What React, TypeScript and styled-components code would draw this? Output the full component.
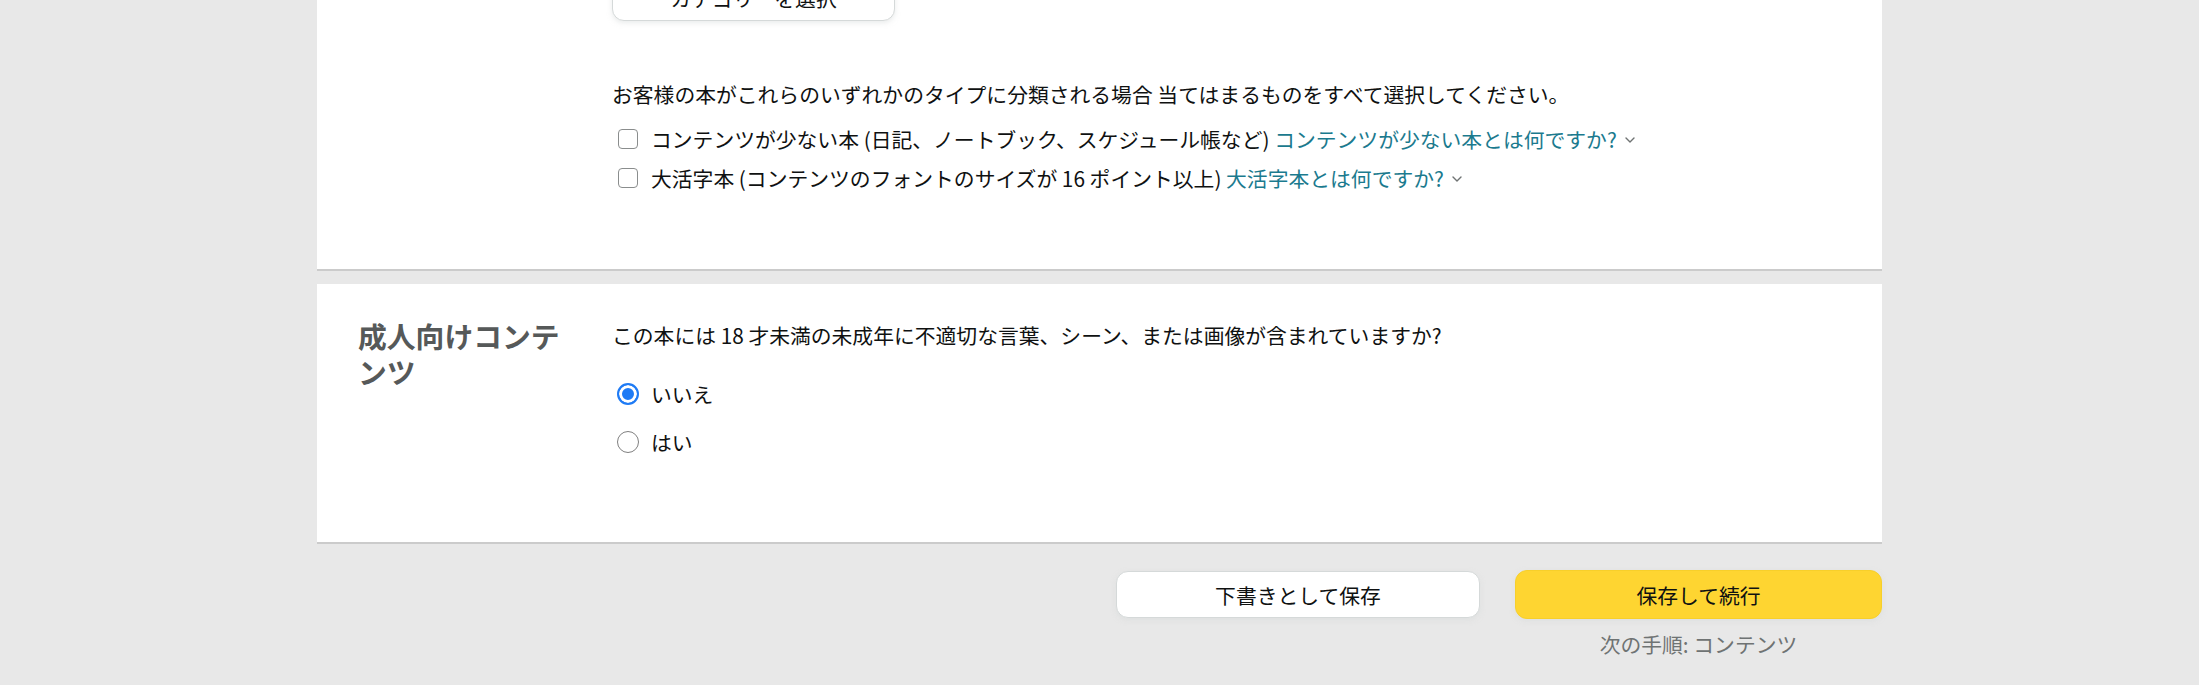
import React, {useState} from "react";
import styled, {createGlobalStyle} from "styled-components";

const GlobalStyle = createGlobalStyle`
  html, body {
    margin: 0;
    padding: 0;
    background: #e8e8e8;
  }
  body {
    font-family: "Noto Sans CJK JP", "Noto Sans", sans-serif;
    color: #0f1111;
  }
`

type RadioProps = {
    checked: boolean
}

const Chevron = () => (
    <ChevronIcon viewBox="0 0 10 6" width={10} height={6}>
        <polyline points="1,1 5,5 9,1" fill="none" stroke="#6f7373" strokeWidth={1.4} strokeLinecap="round" strokeLinejoin="round"/>
    </ChevronIcon>
)

export default function App() {
    const [adult, setAdult] = useState<string>('no')
    const [lowContent, setLowContent] = useState<boolean>(false)
    const [largePrint, setLargePrint] = useState<boolean>(false)

    return (
        <>
            <GlobalStyle/>
            <Page>
                <Panel>
                    <div/>
                    <Content>
                        <CategoryButton>カテゴリーを選択</CategoryButton>
                        <Description>
                            お客様の本がこれらのいずれかのタイプに分類される場合 当てはまるものをすべて選択してください。
                        </Description>
                        <CheckRow onClick={() => setLowContent(!lowContent)}>
                            <CheckBox checked={lowContent}/>
                            <span>
                                コンテンツが少ない本 (日記、ノートブック、スケジュール帳など) <HelpLink>コンテンツが少ない本とは何ですか?</HelpLink>
                                <Chevron/>
                            </span>
                        </CheckRow>
                        <CheckRow $second onClick={() => setLargePrint(!largePrint)}>
                            <CheckBox checked={largePrint}/>
                            <span>
                                大活字本 (コンテンツのフォントのサイズが 16 ポイント以上) <HelpLink>大活字本とは何ですか?</HelpLink>
                                <Chevron/>
                            </span>
                        </CheckRow>
                    </Content>
                </Panel>

                <Panel $adult>
                    <Heading>成人向けコンテンツ</Heading>
                    <Content>
                        <Question>この本には 18 才未満の未成年に不適切な言葉、シーン、または画像が含まれていますか?</Question>
                        <RadioGroup>
                            <RadioRow onClick={() => setAdult('no')}>
                                <Radio checked={adult === 'no'}/>
                                <span>いいえ</span>
                            </RadioRow>
                            <RadioRow onClick={() => setAdult('yes')}>
                                <Radio checked={adult === 'yes'}/>
                                <span>はい</span>
                            </RadioRow>
                        </RadioGroup>
                    </Content>
                </Panel>

                <Footer>
                    <DraftButton>下書きとして保存</DraftButton>
                    <ContinueBlock>
                        <ContinueButton>保存して続行</ContinueButton>
                        <NextStep>次の手順: コンテンツ</NextStep>
                    </ContinueBlock>
                </Footer>
            </Page>
        </>
    )
}

const Page = styled.div`
  width: 1565px;
  margin: -25px auto 0;
`

const Panel = styled.section<{ $adult?: boolean }>`
  display: grid;
  grid-template-columns: 230px 1fr;
  column-gap: 24px;
  padding: ${p => p.$adult ? '0 41px 86px' : '0 41px 77px'};
  margin-top: ${p => p.$adult ? '13px' : '0'};
  background: #fff;
  border-bottom: 2px solid #cbcbcb;
`

const Content = styled.div`
  display: flex;
  flex-direction: column;
  align-items: flex-start;
  font-size: 20.8px;
  line-height: 28px;
`

const CategoryButton = styled.button`
  width: 283px;
  height: 46px;
  box-sizing: border-box;
  background: #fff;
  border: 1px solid #d5d9d9;
  border-radius: 12px;
  box-shadow: 0 2px 5px rgba(213, 217, 217, 0.5);
  font-family: inherit;
  font-size: 20.8px;
  color: #0f1111;
`

const Description = styled.p`
  margin: 59px 0 0;
`

const CheckRow = styled.div<{ $second?: boolean }>`
  display: flex;
  align-items: center;
  gap: 13px;
  margin-top: ${p => p.$second ? '11px' : '17px'};
  cursor: pointer;
`

const CheckBox = styled.span<{ checked: boolean }>`
  display: block;
  width: 20px;
  height: 20px;
  min-width: 20px;
  margin-left: 6px;
  box-sizing: border-box;
  border: 1.5px solid #8a8d8d;
  border-radius: 4px;
  background: ${p => p.checked ? '#1f7bf5' : '#fff'};
`

const HelpLink = styled.a`
  color: #1b7a8e;
  cursor: pointer;
`

const ChevronIcon = styled.svg`
  margin-left: 8px;
  vertical-align: middle;
  position: relative;
  top: -2px;
`

const Heading = styled.h2`
  margin: 0;
  padding-top: 34px;
  max-width: 214px;
  font-size: 28.8px;
  line-height: 36px;
  font-weight: bold;
  color: #565959;
`

const Question = styled.p`
  margin: 37px 0 0;
`

const RadioGroup = styled.div`
  display: flex;
  flex-direction: column;
  gap: 20px;
  margin-top: 31px;
`

const RadioRow = styled.label`
  display: flex;
  align-items: center;
  gap: 12px;
  height: 28px;
  cursor: pointer;
`

const Radio = styled.span<RadioProps>`
  display: block;
  width: 22px;
  height: 22px;
  min-width: 22px;
  margin-left: 5px;
  box-sizing: border-box;
  border-radius: 50%;
  border: ${p => p.checked ? '2px solid #1f7bf5' : '1.5px solid #808080'};
  background: ${p => p.checked ? '#1f7bf5' : '#fff'};
  box-shadow: ${p => p.checked ? 'inset 0 0 0 3px #fff' : 'none'};
`

const Footer = styled.div`
  display: flex;
  justify-content: flex-end;
  align-items: flex-start;
  gap: 35px;
  margin-top: 26px;
`

const BaseButton = styled.button`
  height: 47px;
  box-sizing: border-box;
  border-radius: 12px;
  font-family: inherit;
  font-size: 20.8px;
  color: #0f1111;
  cursor: pointer;
`

const DraftButton = styled(BaseButton)`
  width: 364px;
  margin-top: 1px;
  background: #fff;
  border: 1px solid #d5d9d9;
  box-shadow: 0 2px 5px rgba(213, 217, 217, 0.5);
`

const ContinueBlock = styled.div`
  display: flex;
  flex-direction: column;
  align-items: center;
`

const ContinueButton = styled(BaseButton)`
  width: 367px;
  height: 49px;
  background: #fed531;
  border: 1px solid #f7cf2a;
  box-shadow: 0 2px 5px rgba(213, 217, 217, 0.5);
`

const NextStep = styled.div`
  margin-top: 11px;
  font-size: 20.8px;
  line-height: 28px;
  color: #6f7373;
`
